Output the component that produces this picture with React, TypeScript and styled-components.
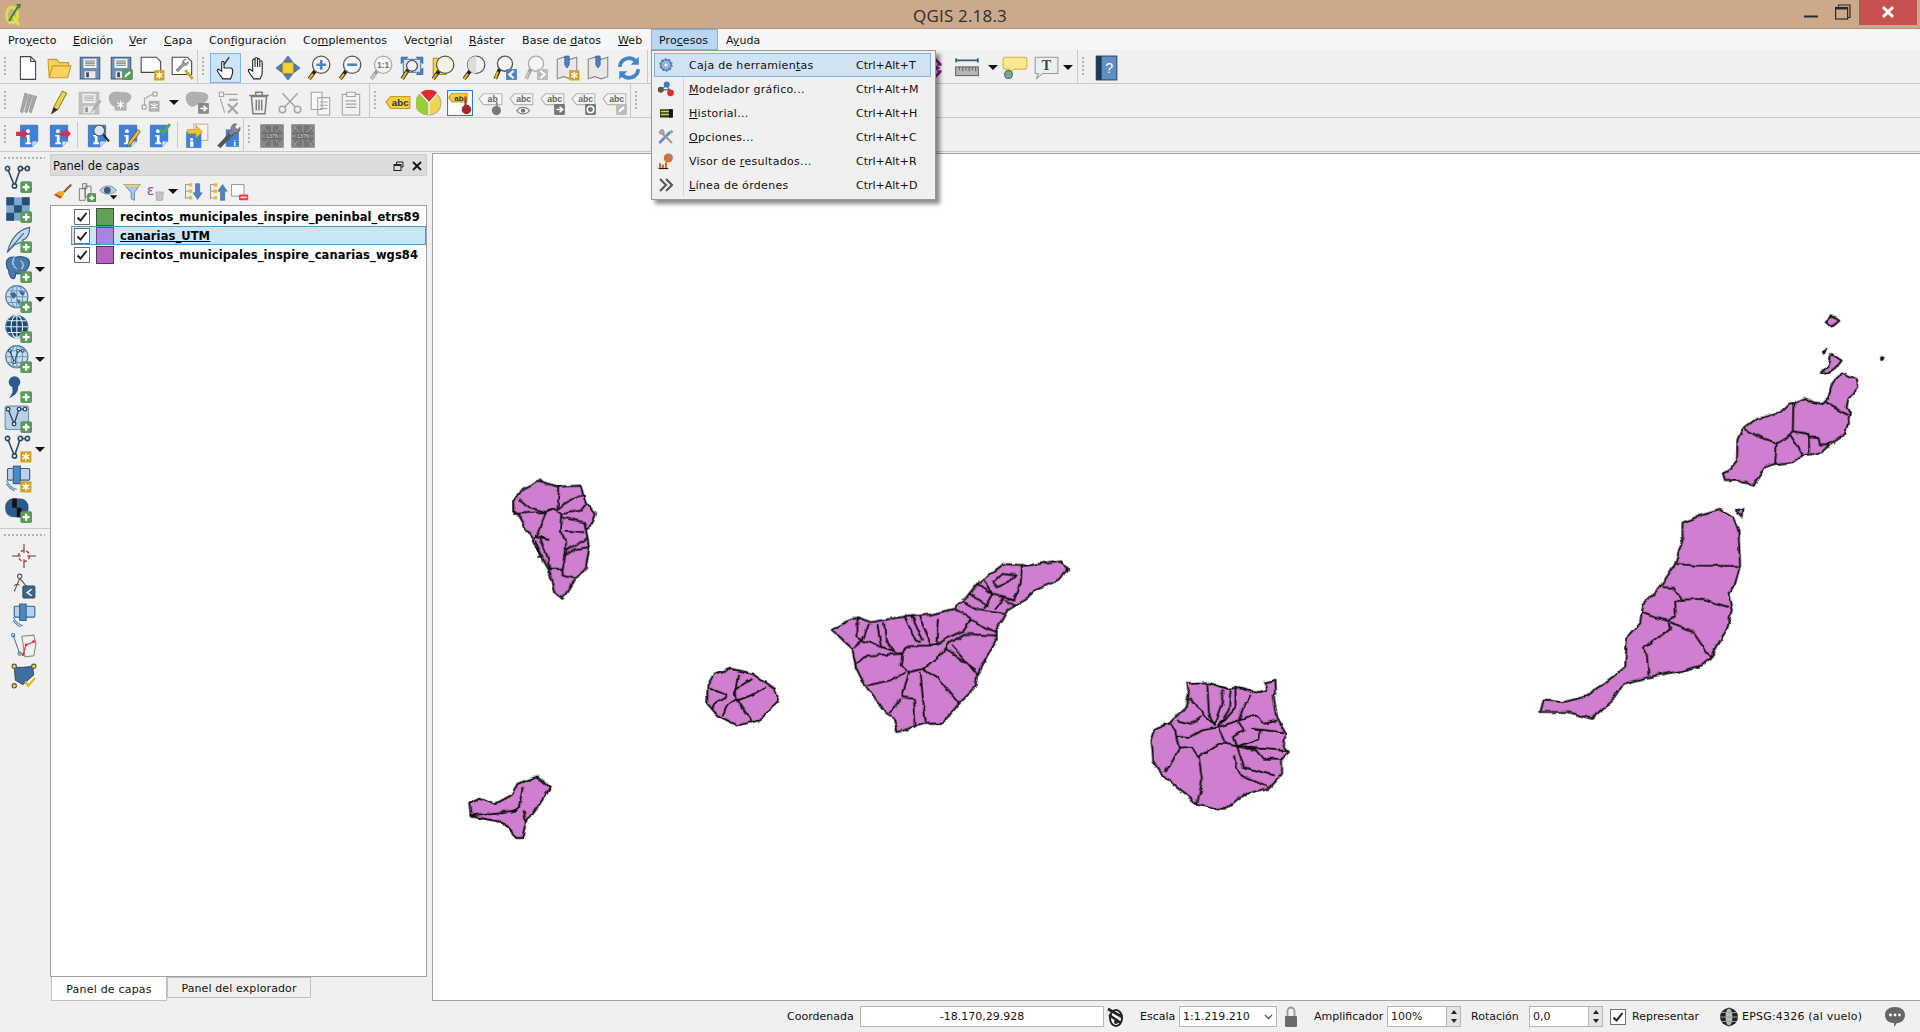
import React from 'react'
import styled, { createGlobalStyle } from 'styled-components'

const Global = createGlobalStyle`
    html, body { margin: 0; padding: 0; height: 100%; overflow: hidden; background: #f0f0f0; }
    body { font-family: "DejaVu Sans", "Liberation Sans", sans-serif; font-size: 11px; color: #111; }
    #root { height: 100%; }
`

const Window = styled.div`
    width: 1920px;
    height: 1032px;
    display: flex;
    flex-direction: column;
    position: relative;
    overflow: hidden;
`

/* title bar */
const TitleBar = styled.div`
    height: 29px;
    flex: none;
    box-sizing: border-box;
    background: #cda98c;
    border-bottom: 1px solid #b3947a;
    display: flex;
    align-items: flex-start;
    position: relative;
`
const TitleText = styled.div`
    position: absolute;
    left: 0;
    right: 0;
    top: 4px;
    text-align: center;
    font: 17px/23px "Open Sans", sans-serif;
    letter-spacing: .2px;
    color: #2e2e2e;
`
const AppLogo = styled.svg`
    width: 18px;
    height: 24px;
    margin: 3px 0 0 4px;
`
const WinButtons = styled.div`
    margin-left: auto;
    display: flex;
    align-items: flex-start;
    margin-right: 3px;
`
const WinBtn = styled.svg<{ $w: number }>`
    width: ${p => p.$w}px;
    height: 25px;
    display: block;
`
const RestoreIcon = styled.svg`
    position: absolute;
    left: 1835px;
    top: 4px;
    width: 16px;
    height: 16px;
`

/* menu bar */
const MenuBar = styled.div`
    height: 21px;
    flex: none;
    background: #f5f6f7;
    display: flex;
    align-items: stretch;
    font-size: 11px;
    letter-spacing: .08px;
`
const MenuEntry = styled.div<{ $w: number; $open?: boolean }>`
    width: ${p => p.$w}px;
    box-sizing: border-box;
    padding-left: 7px;
    line-height: 21px;
    white-space: nowrap;
    border: 1px solid ${p => p.$open ? '#7eb4ea' : 'transparent'};
    background: ${p => p.$open ? '#b8d6f5' : 'transparent'};
`
const Mn = styled.span`
    text-decoration: underline;
`

/* toolbars */
const ToolRow = styled.div<{ $top?: number }>`
    height: 34px;
    flex: none;
    box-sizing: border-box;
    display: flex;
    background: #f0f0f0;
    border-bottom: 1px solid #c9c9c9;
    & > div > div {
        transform: translateY(${p => p.$top ?? 1}px);
    }
`
const ToolGroup = styled.div<{ $w: number; $sep?: boolean }>`
    width: ${p => p.$w}px;
    flex: none;
    box-sizing: border-box;
    display: flex;
    align-items: center;
    padding-left: 12px;
    position: relative;
    border-right: ${p => p.$sep === false ? 'none' : '1px solid #c9c9c9'};
`
const GripBar = styled.i`
    position: absolute;
    left: 4px;
    top: 7px;
    bottom: 7px;
    width: 2px;
    background-image: linear-gradient(#b4b4b4 50%, transparent 50%);
    background-size: 2px 4px;
`
const Tool = styled.div<{ $w?: number; $on?: boolean }>`
    width: ${p => p.$w ?? 31}px;
    height: 30px;
    flex: none;
    box-sizing: border-box;
    display: flex;
    align-items: center;
    justify-content: center;
    background: ${p => p.$on ? '#cce4f7' : 'transparent'};
    border: 1px solid ${p => p.$on ? '#7eb4ea' : 'transparent'};
`
const ThinSep = styled.i`
    width: 1px;
    height: 26px;
    background: #c9c9c9;
    flex: none;
    margin: 0 3px;
`
const DropArrow = styled.i`
    width: 0;
    height: 0;
    flex: none;
    border-left: 5px solid transparent;
    border-right: 5px solid transparent;
    border-top: 5px solid #111;
`
const Glyph = styled.svg.attrs({ viewBox: '0 0 24 24' }) <{ $s?: number }>`
    width: ${p => p.$s ?? 26}px;
    height: ${p => p.$s ?? 26}px;
    flex: none;
    display: block;
`

/* main area */
const Main = styled.div`
    flex: 1;
    display: flex;
    min-height: 0;
`
const SideBar = styled.div`
    width: 50px;
    flex: none;
    box-sizing: border-box;
    padding-top: 3px;
    display: flex;
    flex-direction: column;
    position: relative;
    background: #f0f0f0;
`
const SideGrip = styled.i`
    height: 2px;
    margin: 2px 5px 5px 4px;
    flex: none;
    background-image: linear-gradient(90deg, #b4b4b4 50%, transparent 50%);
    background-size: 4px 2px;
`
const SideTool = styled.div<{ $indent?: number }>`
    height: 30px;
    flex: none;
    display: flex;
    align-items: center;
    padding-left: ${p => p.$indent ?? 4}px;
    gap: 3px;
`
const SideSep = styled.i`
    height: 1px;
    background: #c9c9c9;
    flex: none;
    margin: 4px 0 3px;
`
const LayerPanel = styled.div`
    width: 377px;
    flex: none;
    display: flex;
    flex-direction: column;
    padding-top: 2px;
    box-sizing: border-box;
`
const DockTitle = styled.div`
    height: 22px;
    flex: none;
    box-sizing: border-box;
    background: #dcdcdc;
    border: 1px solid #cfcfcf;
    padding: 2px 4px 0 2px;
    display: flex;
    align-items: center;
    font-size: 11.5px;
    justify-content: space-between;
`
const DockBtns = styled.div`
    display: flex;
    gap: 8px;
    align-items: center;
`
const PanelTools = styled.div`
    height: 25px;
    flex: none;
    margin-top: 3px;
    padding-left: 1px;
    display: flex;
    align-items: center;
`
const PanelTool = styled.div<{ $w?: number }>`
    width: ${p => p.$w ?? 23}px;
    flex: none;
    display: flex;
    justify-content: center;
    align-items: center;
`
const Tree = styled.div`
    flex: 1;
    min-height: 0;
    background: #fff;
    border: 1px solid #a0a0a0;
    box-sizing: border-box;
    padding-top: 1px;
    margin-top: 1px;
`
const LayerRow = styled.div<{ $sel?: boolean }>`
    height: 19px;
    box-sizing: border-box;
    display: flex;
    align-items: center;
    margin-left: 20px;
    padding-left: 3px;
    background: ${p => p.$sel ? '#c9e6f5' : 'transparent'};
    outline: ${p => p.$sel ? '1px solid #4a9bd6' : 'none'};
    outline-offset: -1px;
`
const Check = styled.span`
    width: 16px;
    height: 16px;
    box-sizing: border-box;
    flex: none;
    background: #fff;
    border: 1px solid #707070;
    display: flex;
    align-items: center;
    justify-content: center;
`
const Swatch = styled.span<{ $c: string; $b: string }>`
    width: 18px;
    height: 18px;
    flex: none;
    box-sizing: border-box;
    margin-left: 6px;
    background: ${p => p.$c};
    border: 1px solid ${p => p.$b};
`
const LayerName = styled.span<{ $sel?: boolean }>`
    margin-left: 6px;
    font: bold 11.5px "DejaVu Sans", sans-serif;
    letter-spacing: .085px;
    white-space: nowrap;
    color: #000;
    text-decoration: ${p => p.$sel ? 'underline' : 'none'};
`
const Tabs = styled.div`
    height: 24px;
    flex: none;
    display: flex;
    align-items: flex-start;
`
const Tab = styled.div<{ $on?: boolean; $w: number }>`
    width: ${p => p.$w}px;
    box-sizing: border-box;
    height: ${p => p.$on ? 24 : 21}px;
    line-height: ${p => p.$on ? 25 : 21}px;
    text-align: center;
    background: ${p => p.$on ? '#fff' : '#f0f0f0'};
    border: 1px solid #c0c0c0;
    border-top: ${p => p.$on ? 'none' : '1px solid #c0c0c0'};
    font-size: 11px;
    letter-spacing: ${p => p.$on ? .2 : .12}px;
    margin-left: ${p => p.$on ? 1 : 0}px;
`
const Splitter = styled.div`
    width: 5px;
    flex: none;
`
const MapCanvas = styled.div`
    flex: 1;
    min-width: 0;
    background: #fff;
    border: 1px solid #a0a0a8;
    border-right: none;
    box-sizing: border-box;
    margin-top: 1px;
`
const MapSvg = styled.svg`
    display: block;
    width: 100%;
    height: 100%;
`

/* status bar */
const StatusBar = styled.div`
    height: 31px;
    flex: none;
    background: #f0f0f0;
    display: flex;
    align-items: center;
    font-size: 11px;
    padding-left: 787px;
    white-space: nowrap;
`
const Label = styled.span<{ $w: number; $wide?: boolean }>`
    width: ${p => p.$w}px;
    flex: none;
    letter-spacing: ${p => p.$wide ? .2 : 0}px;
`
const Field = styled.div<{ $w: number; $center?: boolean }>`
    width: ${p => p.$w}px;
    height: 21px;
    flex: none;
    box-sizing: border-box;
    background: #fff;
    border: 1px solid #b5b5b5;
    line-height: 19px;
    padding: 0 3px;
    display: flex;
    justify-content: ${p => p.$center ? 'center' : 'space-between'};
    align-items: center;
`
const Spin = styled.div`
    width: 13px;
    height: 19px;
    margin-right: -3px;
    background: #e4e4e4;
    border-left: 1px solid #b5b5b5;
    display: flex;
    flex-direction: column;
    align-items: center;
    justify-content: space-around;
    flex: none;
`
const SpinUp = styled.i`
    border-left: 3px solid transparent;
    border-right: 3px solid transparent;
    border-bottom: 4px solid #222;
`
const SpinDown = styled.i`
    border-left: 3px solid transparent;
    border-right: 3px solid transparent;
    border-top: 4px solid #222;
`
const Gap = styled.span<{ $w: number }>`
    width: ${p => p.$w}px;
    flex: none;
    display: flex;
    justify-content: center;
`

/* dropdown */
const Dropdown = styled.div`
    position: absolute;
    left: 651px;
    top: 50px;
    width: 285px;
    height: 150px;
    box-sizing: border-box;
    background: #f0f0f0;
    border: 1px solid #979797;
    box-shadow: 4px 4px 4px rgba(0, 0, 0, .45);
    padding: 2px;
    font-size: 11px;
    z-index: 5;
`
const Gutter = styled.i`
    position: absolute;
    left: 31px;
    top: 3px;
    bottom: 3px;
    width: 1px;
    background: #d5d5d5;
`
const DropItem = styled.div<{ $on?: boolean }>`
    height: 24px;
    box-sizing: border-box;
    margin-right: 2px;
    display: flex;
    align-items: center;
    position: relative;
    background: ${p => p.$on ? '#d1e2f2' : 'transparent'};
    border: 1px solid ${p => p.$on ? '#7eb4ea' : 'transparent'};
`
const DropIcon = styled.span`
    width: 22px;
    flex: none;
    display: flex;
    justify-content: center;
    margin-right: 12px;
`
const DropText = styled.span`
    width: 167px;
    flex: none;
    letter-spacing: .3px;
`

/* small reusable drawing parts */
const Plus = ({ x = 14, y = 14 }: { x?: number; y?: number }) => <g transform={`translate(${x} ${y})`}>
    <rect width="10" height="10" rx="1.5" fill="#5c9a5c" />
    <path d="M5 2v6M2 5h6" stroke="#fff" strokeWidth="2" />
</g>
const Star = ({ x = 14, y = 14 }: { x?: number; y?: number }) => <g transform={`translate(${x} ${y})`}>
    <rect width="9.5" height="9.5" fill="#d1a21d" />
    <path d="M4.75 1.5v6.5M1.8 3l5.9 3.5M7.7 3L1.8 6.5" stroke="#fff" strokeWidth="1.2" />
</g>
const Lens = ({ cx = 14, cy = 9, r = 7, fill = '#f4f4f4', grey = false }: { cx?: number; cy?: number; r?: number; fill?: string; grey?: boolean }) => <g>
    <path d={`M${cx - r * .7} ${cy + r * .7}L3 22`} stroke={grey ? '#a0a0a0' : '#222'} strokeWidth="3.4" />
    <path d={`M${cx - r * .95} ${cy + r * 1.05}L3 22`} stroke={grey ? '#c8c8c8' : '#e8b31c'} strokeWidth="2" />
    <circle cx={cx} cy={cy} r={r} fill={fill} stroke={grey ? '#aaa' : '#555'} strokeWidth="1.2" />
</g>
const Page = ({ fill = '#fff', stroke = '#444' }: { fill?: string; stroke?: string }) =>
    <path d="M5 1.5h9.5L19 6v16.5H5zM14.5 1.5V6H19" fill={fill} stroke={stroke} />
const Floppy = ({ c = '#6d8fb6', s = '#3e5d82' }: { c?: string; s?: string }) => <g>
    <path d="M3 2h18v20H3z" fill={c} stroke={s} />
    <rect x="6" y="3.5" width="12" height="8.5" fill="#f2f2f2" />
    <path d="M7.5 5.5h9M7.5 7.5h9M7.5 9.5h9" stroke="#777" />
    <rect x="7" y="15" width="10" height="6.5" fill="#e8e8e8" />
    <rect x="8.5" y="16" width="2.5" height="4.5" fill="#445" />
</g>
const InfoPage = () => <g>
    <path d="M4 2h16v15l-5 5H4z" fill="#3f80d8" stroke="#2a5fa8" strokeWidth=".6" />
    <path d="M20 17h-5v5z" fill="#cfe0f5" />
    <circle cx="11" cy="7.5" r="1.8" fill="#fff" />
    <path d="M8.5 11h4v7h1.5v1.5H8.5V18H10v-5.5H8.5z" fill="#fff" />
</g>
const Abc = ({ t = 'abc', bg = '#f5f5f5', c = '#666', stroke = '#b5b5b5' }: { t?: string; bg?: string; c?: string; stroke?: string }) => <g>
    <path d="M1 8L5 3.5h17v10H5z" fill={bg} stroke={stroke} />
    <text x="13.5" y="11.5" fontSize="8" fontWeight="700" textAnchor="middle" fontFamily="Liberation Sans" fill={c}>{t}</text>
</g>
const VNode = ({ c = '#2a4a66' }: { c?: string }) => <g fill="none" stroke={c} strokeWidth="1.4">
    <path d="M3 3l6 15 5-15h6" />
    <circle cx="3" cy="3" r="1.8" fill="#fff" />
    <circle cx="9" cy="18" r="1.8" fill="#fff" />
    <circle cx="14" cy="3" r="1.8" fill="#fff" />
    <circle cx="20" cy="3" r="1.8" fill="#fff" />
</g>
const Globe = ({ dark = false }: { dark?: boolean }) => <g>
    <circle cx="11" cy="10" r="9.5" fill={dark ? '#1f4a70' : '#c9dcef'} stroke="#4d7aa6" />
    <path d="M11 .5v19M1.5 10h19M3 5h16M3 15h16" stroke={dark ? '#e8f0f8' : '#6d94bb'} strokeWidth=".9" fill="none" />
    <ellipse cx="11" cy="10" rx="5" ry="9.5" fill="none" stroke={dark ? '#e8f0f8' : '#6d94bb'} strokeWidth=".9" />
</g>
const Blob = ({ c = '#b0b0b0' }: { c?: string }) =>
    <path d="M2 7c0-4 4-5.5 9-5s11 0 11 4-3 6-7 6.5-5 3-8 2.5S2 11 2 7z" fill={c} stroke="#999" strokeWidth=".5" />
const Layers3 = () => <g>
    <rect x="3" y="3" width="19" height="10" rx="1" fill="#b9d2ea" stroke="#2d6395" />
    <rect x="8" y="1" width="6" height="15" fill="#4f88bd" stroke="#2d6395" />
    <path d="M2 13c2 4 5 7 9 8M2 16c2 3 4 5 7 6" fill="none" stroke="#5b8bb8" />
</g>
const Wrench = () => <path d="M20 2a5 5 0 0 0-6 6L4 18l3 3 10-10a5 5 0 0 0 6-6l-3 3-3-1-1-3z" fill="#9aa0a6" stroke="#444" strokeWidth=".7" />
const MapSheet = () => <path d="M3 4l6-2 6 2 6-2v18l-6 2-6-2-6 2z" fill="#e8e8e8" stroke="#888" />
const Pin = () => <path d="M10 1h4v8l-2 3-2-3z" fill="#4f81bd" stroke="#2d5a8c" strokeWidth=".7" />

const i = {
    newFile: <Page />,
    open: <path d="M2 7V4h8l2 3h9v3H6l-3 11zM3 21l3-11h17l-3 11z" fill="#f6d35f" stroke="#c79c2e" />,
    save: <Floppy />,
    saveAs: <g><Floppy /><rect x="13" y="13" width="10" height="10" rx="1.5" fill="#5c9a5c" /><path d="M15 21l1-3 4-3 1 1.5-4 3.5z" fill="#fff" /></g>,
    comp: <g><path d="M2 2h14l4 4v10H2z" fill="#fff" stroke="#444" /><Star /></g>,
    compMgr: <g><path d="M2 2h14l4 4v12H2z" fill="#fff" stroke="#444" /><g transform="translate(3 3) scale(.6)"><Wrench /></g><path d="M14 14l7 8" stroke="#d9a520" strokeWidth="2.5" /></g>,
    pointer: <g><path d="M9 22c-2-3-5-6-5-8 0-1 1.5-1 2.5 0L8 15V7c0-1.6 2.2-1.6 2.2 0v5h6c1.5 0 2 1 2 3 0 3-1 4-2 7z" fill="#fff" stroke="#222" /><path d="M15 2l-5 7" stroke="#333" strokeWidth="1.2" /></g>,
    hand: <path d="M9 22c-2-3-5-6-5-8 0-1 1.5-1 2.5 0L8 15V5c0-1.6 2.2-1.6 2.2 0v6V3.5c0-1.6 2.2-1.6 2.2 0V11V4.5c0-1.6 2.2-1.6 2.2 0V11V6.5c0-1.6 2.2-1.6 2.2 0V16c0 3-1 4-2 6z" fill="#fff" stroke="#222" />,
    panSel: <g><rect x="7" y="7" width="10" height="10" fill="#f2cf3f" stroke="#b8941f" /><path d="M12 1l4 5H8zM12 23l4-5H8zM1 12l5-4v8zM23 12l-5-4v8z" fill="#4f81bd" stroke="#2d5a8c" strokeWidth=".7" /></g>,
    zoomIn: <g><Lens r={8} cy={9} /><path d="M14 4.5v9M9.5 9h9" stroke="#4f81bd" strokeWidth="2.4" /></g>,
    zoomOut: <g><Lens r={8} cy={9} /><path d="M9.5 9h9" stroke="#4f81bd" strokeWidth="2.4" /></g>,
    zoom11: <g><Lens r={8} cy={9} grey /><text x="14" y="12" fontSize="8" fontWeight="700" textAnchor="middle" fontFamily="Liberation Sans" fill="#777">1:1</text></g>,
    zoomFull: <g><path d="M2 2h6L2 8zM22 2h-6l6 6zM22 18h-6l6-6z" fill="#4f81bd" stroke="#2d5a8c" strokeWidth=".7" /><rect x="4" y="4" width="16" height="12" fill="#d7e4f2" stroke="#4f81bd" /><Lens r={5} cx={12} cy={10} /></g>,
    zoomLayer: <g><rect x="3" y="3" width="12" height="15" fill="#f2d54a" stroke="#b8941f" /><Lens r={8} cy={9} fill="#f4f2e0" /></g>,
    zoomSel: <g><Lens r={8} cy={9} fill="#f2f2f2" /><path d="M14 1a8 8 0 0 0 0 16z" fill="#dcdcdc" /></g>,
    zoomLast: <g><Lens r={7} cx={12} cy={8} /><rect x="13" y="13" width="10" height="10" fill="#4f81bd" /><path d="M20 14.5L16 18l4 3.5" stroke="#fff" strokeWidth="2" fill="none" /></g>,
    zoomNext: <g><Lens r={7} cx={12} cy={8} grey /><rect x="13" y="13" width="10" height="10" fill="#bbb" /><path d="M16 14.5L20 18l-4 3.5" stroke="#fff" strokeWidth="2" fill="none" /></g>,
    bookNew: <g><MapSheet /><Pin /><Star /></g>,
    book: <g><MapSheet /><Pin /></g>,
    refresh: <g fill="none" stroke="#3f86cc" strokeWidth="3.4"><path d="M3.5 11a8.5 8.5 0 0 1 15-5" /><path d="M20.5 13a8.5 8.5 0 0 1-15 5" /><path d="M21 1.5V9h-7.5zM3 22.5V15h7.5z" fill="#3f86cc" stroke="none" /></g>,
    purple: <path d="M3 3h12l5 5v2h-4V7H3zM3 21h12l5-5v-2h-4v3H3zM12 8l7 4-7 4z" fill="#8e1b8e" />,
    measure: <g><path d="M2 5h20M2 3v4M22 3v4" stroke="#3d5a78" strokeWidth="1.6" /><rect x="1.5" y="11" width="21" height="8" fill="#b5b5b5" stroke="#666" /><path d="M5 11v3M8 11v4M11 11v3M14 11v4M17 11v3M20 11v4" stroke="#666" /></g>,
    tip: <g><path d="M3 2h18a2 2 0 0 1 2 2v7a2 2 0 0 1-2 2h-9l-5 3v-3H3a2 2 0 0 1-2-2V4a2 2 0 0 1 2-2z" fill="#fbe88e" stroke="#d9b53c" /><circle cx="6" cy="18" r="3.6" fill="#79ad79" stroke="#567" /></g>,
    textT: <g><path d="M2 2h21v15H9l-6 5 2-5H2z" fill="#e8f0f4" stroke="#9a9a9a" /><text x="12.5" y="14" fontSize="13" fontWeight="700" textAnchor="middle" fontFamily="Liberation Serif" fill="#444">T</text></g>,
    help: <g><rect x="3" y="1" width="19" height="22" fill="#5f8fc4" stroke="#2d4a66" /><rect x="3" y="1" width="5" height="22" fill="#213a52" /><text x="15" y="17" fontSize="13" textAnchor="middle" fontFamily="Liberation Sans" fill="#fff">?</text></g>,
    pencils: <g fill="#a8a8a8" stroke="#8a8a8a" strokeWidth=".6"><path d="M5 20L9 3l3 1-5 17zM9 20l4-16 3 1-5 16z" /><path d="M13 20l4-15 3 1-5 15z" /></g>,
    pencil: <g><path d="M6 22l2-6L16 1l4 2-8 15z" fill="#f4d04a" stroke="#7a6520" strokeWidth=".8" /><path d="M6 22l2-6 4 2z" fill="#333" /></g>,
    saveEdit: <g opacity=".55"><Floppy c="#9c9c9c" s="#8a8a8a" /><path d="M13 22l3-6 6-7 1.5 1.5-6 7z" fill="#777" /></g>,
    polyStar: <g><Blob /><g transform="translate(7 8)"><rect width="11" height="11" fill="#b0b0b0" /><path d="M5.5 2v7M2.5 3.500l6 4M8.500 3.500l-6 4" stroke="#fff" /></g></g>,
    nodeStar: <g><path d="M5 17V8l9-5" fill="none" stroke="#aaa" /><rect x="3" y="14" width="3.5" height="3.5" fill="#fff" stroke="#999" /><rect x="13" y="2" width="3.5" height="3.5" fill="#fff" stroke="#999" /><g transform="translate(9 10)"><rect width="10" height="10" fill="#b0b0b0" /><path d="M5 2v6M2 3l6 4M8 3L2 7" stroke="#fff" /></g></g>,
    polyArrow: <g><Blob /><rect x="13" y="12" width="10" height="10" rx="1" fill="#888" /><path d="M15 17h5M18 14.5l3 2.5-3 2.5" stroke="#fff" strokeWidth="1.4" fill="none" /></g>,
    nodeTool: <g stroke="#a5a5a5" fill="none"><rect x="3" y="2" width="4" height="4" /><path d="M8 4h12M4 8l4 13" /><path d="M11 13l9 9M20 12l-9 9M12 9h8" strokeWidth="2" /></g>,
    trash: <g fill="none" stroke="#7e7e7e" strokeWidth="1.4"><path d="M5 6h14l-1.500 16h-11zM3 5h18M9 5V2h6v3M9.500 9v10M12 9v10M14.500 9v10" /></g>,
    cut: <g fill="none" stroke="#a5a5a5" strokeWidth="1.4"><circle cx="5" cy="18" r="3" /><circle cx="19" cy="18" r="3" /><path d="M7 16L19 3M17 16L5 3" /></g>,
    copy: <g fill="#f8f8f8" stroke="#a5a5a5"><path d="M3 2h10v16H3zM9 7h11v16H9z" /><path d="M11 11h7M11 14h7M11 17h7" /></g>,
    paste: <g fill="#f2f2f2" stroke="#a5a5a5"><path d="M4 4h16v19H4z" /><path d="M8 2h8v4H8zM7 10h10M7 13h10M7 16h10" /></g>,
    lbl: <g transform="translate(0 2)"><path d="M1 9l4-5h18v11H5z" fill="#f2d03c" stroke="#c59c1d" /><text x="14" y="13" fontSize="9" fontWeight="700" textAnchor="middle" fontFamily="Liberation Sans" fill="#333">abc</text></g>,
    pie: <g><circle cx="12" cy="12" r="11" fill="#f2d54a" stroke="#aaa" /><path d="M12 12L4 3a11 11 0 0 1 16 0z" fill="#e02c2c" /><path d="M12 12v11A11 11 0 0 1 4 3z" fill="#9ccb3c" /><path d="M12 12L4 3M12 12L20 3M12 12v11" stroke="#eee" strokeWidth="1.4" /></g>,
    pinLbl: <g><rect x=".5" y=".5" width="23" height="23" fill="#fff" stroke="#2a7bd4" /><path d="M1.500 7l3-4h14v8H4.500z" fill="#f2d03c" stroke="#c59c1d" /><text x="11" y="10" fontSize="7.5" fontWeight="700" textAnchor="middle" fontFamily="Liberation Sans" fill="#333">ab</text><rect x="16" y="6" width="2" height="10" fill="#b33" /><circle cx="18" cy="18" r="4.400" fill="#a32a2a" /></g>,
    lblPin: <g><Abc t="ab" /><rect x="16.500" y="11" width="1.600" height="6" fill="#888" /><circle cx="17" cy="19" r="4.200" fill="#777" /></g>,
    lblEye: <g><Abc /><path d="M7 19c3-4 9-4 12 0-3 4-9 4-12 0z" fill="#fff" stroke="#888" /><circle cx="13" cy="19" r="2" fill="#777" /></g>,
    lblMove: <g><Abc /><rect x="13" y="13" width="10" height="10" fill="#777" rx="1" /><path d="M15 18h5M18 15.500l3 2.500-3 2.500" stroke="#fff" strokeWidth="1.400" fill="none" /></g>,
    lblRot: <g><Abc /><rect x="13" y="13" width="10" height="10" fill="#777" rx="1" /><circle cx="18" cy="18" r="3" fill="none" stroke="#fff" strokeWidth="1.400" /></g>,
    lblEdit: <g><Abc /><rect x="13" y="13" width="10" height="10" fill="#bbb" rx="1" /><path d="M15 21l1-3 4-3 1 1.500-4 3.500z" fill="#fff" /></g>,
    infoIn: <g transform="translate(1 0)"><InfoPage /><path d="M0 8h6v-3l5 5-5 5v-3H0z" fill="#d22e55" /></g>,
    infoOut: <g><InfoPage /><path d="M13 8h5V5l5 5-5 5v-3h-5z" fill="#d22e55" /></g>,
    infoFind: <g><InfoPage /><circle cx="14" cy="7" r="5" fill="#dde6f0" stroke="#555" /><path d="M18 11l5 6" stroke="#222" strokeWidth="2" /></g>,
    infoPen: <g><InfoPage /><path d="M11 22l2-5 8-11 2.500 2-8 11z" fill="#f0b52a" stroke="#444" strokeWidth=".6" /></g>,
    infoOk: <g><InfoPage /><path d="M13 6l3 3 6-8" stroke="#48b048" strokeWidth="2.600" fill="none" /></g>,
    infoCopy: <g><path d="M9 1h13v15H9z" fill="#f4f4f4" stroke="#bbb" /><path d="M2 8h14v15H2z" fill="#3f80d8" /><path d="M3 6h8V2l6 6-6 6v-4H3z" fill="#f2c32c" stroke="#a5821b" strokeWidth=".5" /><circle cx="7" cy="15" r="1.400" fill="#fff" /><rect x="5.600" y="17" width="3" height="5" fill="#fff" /></g>,
    infoTool: <g><path d="M10 6h12v16H10z" fill="#3f80d8" /><path d="M2 21l12-13 3 3L5 23z" fill="#555" /><path d="M20 1a4 4 0 0 0-5 5l-3 3 3 3 3-3a4 4 0 0 0 5-5l-2 2-2-1-1-2z" fill="#888" stroke="#333" strokeWidth=".5" /><text x="17" y="21" fontSize="8" fontWeight="700" fontFamily="Liberation Serif" fill="#fff">i</text></g>,
    grid: <g><rect x="1.500" y="1.500" width="21" height="21" fill="#777" stroke="#999" /><path d="M2 2l20 20M22 2L2 22M12 2v20M2 12h20M6 2l-4 6M18 2l4 6M6 22l-4-6M18 22l4-6" stroke="#aaa" strokeWidth=".7" /><rect x="6" y="9" width="12" height="6" fill="#666" /><text x="12" y="14" fontSize="5" textAnchor="middle" fontFamily="Liberation Sans" fill="#ddd">1376</text></g>,
    vAdd: <g><VNode /><Plus /></g>,
    raster: <g><rect x="2" y="2" width="20" height="20" fill="#7ea7cf" /><path d="M2 2h6.700v6.700H2zM15.300 2H22v6.700h-6.700zM8.700 8.700h6.600v6.600H8.700zM2 15.300h6.700V22H2z" fill="#274f77" /><Plus /></g>,
    feather: <g><path d="M3 23C5 14 11 4 22 2c0 7-3 10-6 11 1 1 0 2-2 2l-5 2z" fill="#c7d8e8" stroke="#3d6a94" /><path d="M3 23L17 7" stroke="#3d6a94" /><Plus /></g>,
    pg: <g><path d="M2 7c0-4 4-6 8-5 3-1 9-1 11 2s0 8-3 10c0 3-2 4-3 1-2 2-4 1-5 0 0 4-1 6-3 5s-3-5-3-7C2 11 2 9 2 7z" fill="#4a7ba8" stroke="#2d5a8c" /><path d="M9 2c-3 4-1 8 2 10M14 5c3 1 3 5 1 7" stroke="#fff" strokeWidth=".8" fill="none" /><Plus /></g>,
    wms: <g><Globe /><path d="M5 7l4-1 2 3-3 3zM13 5l5 1-1 3-3-1zM11 12l3 1-1 5z" fill="#3e6a94" /><Plus /></g>,
    wcs: <g><Globe dark /><Plus /></g>,
    wfs: <g><Globe /><g transform="translate(3 3) scale(.65)"><VNode /></g><Plus /></g>,
    comma: <g><circle cx="9" cy="6" r="5" fill="#2d5a8c" /><path d="M12 8c1 6-2 10-8 12 3-3 4-6 3-9z" fill="#2d5a8c" /><Plus /></g>,
    vBox: <g><rect x="1" y="1" width="20" height="20" rx="2" fill="#b9d0e6" stroke="#6e93b6" /><g transform="translate(1 1) scale(.85)"><VNode /></g><Plus /></g>,
    vStar: <g><VNode /><Star /></g>,
    layerStar: <g><Layers3 /><Star /></g>,
    ovalAdd: <g><rect x="1" y="3" width="20" height="16" rx="7" fill="#2d5a8c" /><path d="M7 3h4v8H7zM11 11h4v8h-4z" fill="#111" /><Plus /></g>,
    cross: <g stroke="#444" fill="none"><path d="M12 1v8M12 15v8M1 12h8M15 12h8" /><circle cx="12" cy="12" r="5" stroke="#c6363c" strokeDasharray="3 2" strokeWidth="1.400" /></g>,
    compass: <g fill="none" stroke="#555"><circle cx="8" cy="3" r="2" /><path d="M8 5L3 17M8 5l7 8M3 12c2-3 4-1 5-1" /><rect x="11" y="12" width="11" height="11" fill="#3f6885" stroke="#2d4a66" rx="1" /><path d="M19 15l-4 3 4 3" stroke="#fff" strokeWidth="1.400" /></g>,
    layers: <Layers3 />,
    vPoly: <g fill="none"><path d="M2 2l6 17" stroke="#4a7ba8" /><circle cx="2" cy="2" r="1.500" stroke="#4a7ba8" /><circle cx="8" cy="19" r="1.500" stroke="#4a7ba8" /><path d="M10 3l11-1 2 8-2 11-8 1z" stroke="#888" /><path d="M11 20l3-9 7-3" stroke="#d33" /><circle cx="11" cy="20" r="1.300" fill="#d33" /><circle cx="14" cy="11" r="1.300" fill="#d33" /><circle cx="21" cy="8" r="1.300" fill="#d33" /></g>,
    vCheck: <g><path d="M3 4l8 0 9-1 1 8-10 9-7-4z" fill="#3f6fa0" stroke="#222" strokeWidth=".6" /><circle cx="3" cy="3" r="2" fill="#f2d54a" stroke="#555" /><circle cx="21" cy="3" r="2" fill="#f2d54a" stroke="#555" /><circle cx="3" cy="21" r="2" fill="#f2d54a" stroke="#555" /><path d="M13 17l3 4 6-7" stroke="#d9b91c" strokeWidth="2" fill="none" /></g>,
    brush: <g><path d="M13 12L22 3" stroke="#8a6020" strokeWidth="2.600" /><path d="M2 15c3-3 7-6 11-3 1 3-2 7-5 8-2-1-5-2-6-5z" fill="#e8a828" /><path d="M2 15c3 1 6 2 8 4" stroke="#c33" strokeWidth="2" fill="none" /></g>,
    addGroup: <g fill="none" stroke="#666"><path d="M4 8h7v14H4zM11 5h7v13h-7z" fill="#efefef" /><path d="M8 2h5v6H8z" /><Plus x={14} y={14} /></g>,
    eye: <g><path d="M1 10c5-7 15-7 20 0-5 6-15 6-20 0z" fill="#c0cfdc" stroke="#6a8098" /><circle cx="10" cy="10" r="4" fill="#3d5a78" /><path d="M13 16h9l-4.500 5z" fill="#111" /></g>,
    funnel: <g><path d="M2 3h20l-7 9v10l-4-2v-8z" fill="#a9cbe6" stroke="#4a7ba8" /><path d="M2 3h20l-1.500 2.500h-17z" fill="#f2d54a" /></g>,
    epsilon: <g><text x="2" y="15" fontSize="17" fontFamily="DejaVu Sans" fill="#8c5a94">ε</text><path d="M13 12h9l-1 10h-7z" fill="#c4c4c4" stroke="#aaa" /></g>,
    expand: <g><path d="M3 3h6M3 3v17M3 11h6M3 19h6" stroke="#888" fill="none" /><rect x="7" y="1.500" width="4" height="4" fill="#f2b632" /><rect x="7" y="9" width="4" height="4" fill="#f2b632" /><rect x="7" y="17" width="4" height="4" fill="#f2b632" /><path d="M15 2h5v11h3l-5.500 8-5.500-8h3z" fill="#4f81bd" stroke="#2d5a8c" strokeWidth=".6" /></g>,
    collapse: <g><path d="M3 3h6M3 3v17M3 11h6M3 19h6" stroke="#888" fill="none" /><rect x="7" y="1.500" width="4" height="4" fill="#f2b632" /><rect x="7" y="9" width="4" height="4" fill="#f2b632" /><rect x="7" y="17" width="4" height="4" fill="#f2b632" /><path d="M15 22h5V11h3l-5.500-8-5.500 8h3z" fill="#4f81bd" stroke="#2d5a8c" strokeWidth=".6" /></g>,
    removeLayer: <g><path d="M3 3h15v14H3z" fill="#fafafa" stroke="#888" /><rect x="12" y="15" width="11" height="7" rx="1" fill="#e44" /><path d="M14 18.500h7" stroke="#fff" strokeWidth="1.600" /></g>,
    gear: <g><circle cx="12" cy="12" r="7" fill="#a9c4e4" stroke="#4f81bd" strokeWidth="2" /><circle cx="12" cy="12" r="7" fill="none" stroke="#4f81bd" strokeWidth="4" strokeDasharray="2 2.400" /><circle cx="12" cy="12" r="3" fill="#eef3fa" stroke="#4f81bd" /></g>,
    modeler: <g><path d="M5 13L13 7M13 7l5 9M5 13h13" stroke="#777" strokeWidth="2" /><circle cx="5" cy="13" r="4" fill="#555" /><circle cx="13" cy="6" r="4" fill="#3a7ad9" /><circle cx="18" cy="17" r="4.500" fill="#e82a2a" /></g>,
    history: <g><rect x="4" y="7" width="17" height="11" fill="#2a3a1a" /><path d="M5 10h11M5 14h11" stroke="#dcd23c" strokeWidth="2" /><rect x="16" y="7" width="5" height="11" fill="#111" /></g>,
    tools: <g><path d="M3 20L18 5" stroke="#5f8fc4" strokeWidth="3.500" /><path d="M20 20L7 7" stroke="#999" strokeWidth="2.500" /><path d="M8 2a4.500 4.500 0 0 0-5 5l4 2 3-3z" fill="#aaa" stroke="#666" strokeWidth=".6" /><path d="M18 2l4 3-3 2z" fill="#888" /></g>,
    results: <g><circle cx="15" cy="8" r="6" fill="#e06c2c" /><path d="M15 8V2a6 6 0 0 1 6 6z" fill="#8a8a9a" /><path d="M4 21v-6M8 21v-4M12 21v-7" stroke="#d9581c" strokeWidth="2.500" /><path d="M2 22h13" stroke="#222" strokeWidth="1.600" /></g>,
    chevrons: <g fill="none" stroke="#555" strokeWidth="2.800"><path d="M4 4l8 8-8 8M12 4l8 8-8 8" /></g>,
}
type IconName = keyof typeof i

const Ic = ({ n, s }: { n: IconName; s?: number }) => <Glyph $s={s}>{i[n]}</Glyph>

const CheckMark = () => <svg width="12" height="12" viewBox="0 0 12 12"><path d="M1.500 6.500l3 3L10.500 2" fill="none" stroke="#222" strokeWidth="2" /></svg>

/* islands: coordinates were read from crops, so each one carries its crop origin */
type IslandData = { x: number; y: number; outline: string[]; lines: string[] }

const islands: IslandData[] = [
    {
        x: 1520, y: 300,
        outline: [
            '608,515 630,505 650,480 652,420 668,385 715,350 780,335 805,312 820,310 855,295 885,305 905,310 925,290 935,250 965,215 1010,235 1015,260 985,295 980,320 990,340 975,400 930,430 905,455 850,465 820,485 765,490 735,500 700,553 685,545 645,540 615,542',
            '905,215 925,195 935,160 965,180 945,205 925,220',
            '910,150 920,145 915,160',
            '917,65 935,47 955,60 935,77',
            '1086,170 1090,170 1090,174 1086,174',
            '650,630 670,622 668,648',
            '490,670 540,645 600,628 640,650 655,690 660,795 645,850 625,880 635,930 620,990 590,1040 570,1075 545,1095 490,1110 395,1128 310,1150 285,1190 215,1255 140,1235 60,1235 70,1200 130,1205 190,1190 250,1150 315,1100 320,1010 360,965 370,910 420,860 465,790 490,710',
        ],
        lines: [
            '675,385 720,410 770,428 805,408 818,390 820,310',
            '770,428 765,490',
            '818,392 865,400 868,455',
            '810,405 850,465',
            '868,410 895,412 900,432 930,430',
            '915,305 985,345',
            '465,790 530,795 655,797',
            '425,860 460,862 488,897 465,905 467,945 445,962 400,950 367,937',
            '488,897 545,895 625,920',
            '450,965 520,997 572,1073',
            '445,965 450,985 410,1015 365,1045 380,1060 385,1125',
        ],
    },
    {
        x: 820, y: 540,
        outline: ['30,265 60,250 110,230 150,245 240,230 330,222 400,205 440,170 480,120 510,100 550,70 620,75 720,60 740,85 720,115 650,145 620,175 560,210 525,270 525,300 470,400 465,440 415,490 365,550 310,550 230,575 220,535 195,520 130,430 105,380 95,325'],
        lines: [
            '110,230 110,290 125,300 95,325',
            '125,300 145,250',
            '125,300 215,330 245,340',
            '170,250 180,315',
            '190,245 195,300 220,330',
            '250,225 285,300 300,305',
            '270,225 305,300',
            '295,228 325,295 325,315 350,310 355,235',
            '245,340 255,318 325,315 350,312 385,290 430,270 450,235',
            '245,340 240,375 265,395 310,385 360,345 385,310 430,280 525,285',
            '105,375 140,345 245,340',
            '140,435 210,420 255,395',
            '265,395 245,470 280,475',
            '300,395 305,460',
            '240,475 205,520',
            '280,475 285,565',
            '305,460 315,545',
            '310,385 350,410 415,490',
            '395,315 470,400',
            '375,325 465,385',
            '445,235 525,275',
            '400,205 450,235',
            '430,185 480,210 550,220',
            '450,160 500,195',
            '470,130 515,160 490,205',
            '490,120 515,160 580,180 600,130 605,70',
            '580,180 550,170 520,205',
            '550,180 585,195',
            '520,125 545,100 585,105 565,125 530,140 520,125',
        ],
    },
    {
        x: 1130, y: 660,
        outline: ['170,68 230,65 290,85 330,80 385,98 410,90 405,65 435,58 437,100 430,110 440,170 465,215 460,260 475,275 455,295 455,340 425,375 415,385 340,405 290,445 265,445 200,430 100,350 65,300 60,240 72,205 115,190 165,140 175,100'],
        lines: [
            '230,65 235,155 250,195',
            '275,90 275,125 250,195',
            '300,90 295,145 262,200',
            '315,85 315,140 270,190',
            '360,100 335,150 325,180 262,200',
            '175,115 215,150 220,165 250,190',
            '140,180 180,190 215,170',
            '120,190 135,215 145,265 105,335',
            '135,225 180,230 215,210 262,200',
            '145,265 185,262 200,290 265,250 285,250 320,258',
            '262,200 285,250',
            '325,180 380,165 400,190 440,180',
            '325,185 340,210 310,230 320,258 385,235 390,210 360,205',
            '360,205 460,215',
            '320,258 390,265 470,272',
            '320,258 380,270 400,295 455,295',
            '320,258 340,320 430,345',
            '310,285 320,320 330,345 415,380',
            '205,290 215,360 200,430',
        ],
    },
    {
        x: 450, y: 460,
        outline: ['187,125 215,85 265,60 320,78 390,75 405,125 435,160 425,190 405,205 415,265 405,320 370,360 335,415 310,395 295,330 245,240 205,165 187,150'],
        lines: [
            '205,115 235,140 285,155 310,145 335,160',
            '190,160 260,155 285,155',
            '325,80 320,145',
            '395,100 340,130 320,145',
            '405,130 390,150 335,160',
            '310,145 285,155 260,215 245,240',
            '335,160 330,210 345,240 345,275 335,325 295,325',
            '330,170 400,185 405,205',
            '340,210 400,215',
            '345,270 410,235',
            '340,285 375,265 415,260',
            '335,325 335,345 370,355',
            '250,225 290,235 265,225 290,290 295,325',
            '255,240 275,290 262,292',
        ],
    },
    {
        x: 450, y: 650,
        outline: [
            '770,105 790,70 840,55 905,70 970,115 985,155 925,210 860,225 800,195 770,160',
            '55,460 85,445 130,462 180,435 200,400 260,378 297,410 265,460 225,515 215,560 195,560 155,515 60,498',
        ],
        lines: [
            '865,70 855,130 858,145',
            '905,85 860,115 850,135',
            '945,110 900,135 860,150',
            '858,145 830,165 815,195',
            '858,145 905,218',
            '775,115 800,120 830,130 820,145 790,160 785,175',
            '55,495 200,480',
            '215,410 205,470 180,485',
            '218,480 225,515',
        ],
    },
]

const Island = ({ x, y, outline, lines }: IslandData) => <g transform={`translate(${x} ${y}) scale(.3333)`}>
    {outline.map(p => <polygon key={p} points={p} fill="#d07fd0" stroke="#0a0a0a" strokeWidth="1.9" strokeLinejoin="round" vectorEffect="non-scaling-stroke" />)}
    {lines.map(p => <polyline key={p} points={p} fill="none" stroke="#0a0a0a" strokeWidth="1.8" strokeLinejoin="round" vectorEffect="non-scaling-stroke" />)}
</g>

const menus: { w: number; label: React.ReactNode; open?: boolean }[] = [
    { w: 65, label: <>Pro<Mn>y</Mn>ecto</> },
    { w: 56, label: <><Mn>E</Mn>dición</> },
    { w: 35, label: <><Mn>V</Mn>er</> },
    { w: 45, label: <><Mn>C</Mn>apa</> },
    { w: 94, label: <>Con<Mn>f</Mn>iguración</> },
    { w: 101, label: <>Co<Mn>m</Mn>plementos</> },
    { w: 65, label: <>Vect<Mn>o</Mn>rial</> },
    { w: 53, label: <><Mn>R</Mn>áster</> },
    { w: 96, label: <>Base de <Mn>d</Mn>atos</> },
    { w: 41, label: <><Mn>W</Mn>eb</> },
    { w: 67, label: <>Pro<Mn>c</Mn>esos</>, open: true },
    { w: 60, label: <>A<Mn>y</Mn>uda</> },
]

const dropItems: { icon: IconName; label: React.ReactNode; key: string }[] = [
    { icon: 'gear', label: <>Caja de herramien<Mn>t</Mn>as</>, key: 'Ctrl+Alt+T' },
    { icon: 'modeler', label: <><Mn>M</Mn>odelador gráfico...</>, key: 'Ctrl+Alt+M' },
    { icon: 'history', label: <><Mn>H</Mn>istorial...</>, key: 'Ctrl+Alt+H' },
    { icon: 'tools', label: <><Mn>O</Mn>pciones...</>, key: 'Ctrl+Alt+C' },
    { icon: 'results', label: <>Visor de <Mn>r</Mn>esultados...</>, key: 'Ctrl+Alt+R' },
    { icon: 'chevrons', label: <><Mn>L</Mn>ínea de órdenes</>, key: 'Ctrl+Alt+D' },
]

const sideTop: { n: IconName; arrow?: boolean }[] = [
    { n: 'vAdd' }, { n: 'raster' }, { n: 'feather' }, { n: 'pg', arrow: true }, { n: 'wms', arrow: true },
    { n: 'wcs' }, { n: 'wfs', arrow: true }, { n: 'comma' }, { n: 'vBox' }, { n: 'vStar', arrow: true },
    { n: 'layerStar' }, { n: 'ovalAdd' },
]
const sideBottom: IconName[] = ['cross', 'compass', 'layers', 'vPoly', 'vCheck']

const layers = [
    { name: 'recintos_municipales_inspire_peninbal_etrs89', c: '#64a05a', b: '#3a5a34' },
    { name: 'canarias_UTM', c: '#a585e2', b: '#5c4a80', sel: true },
    { name: 'recintos_municipales_inspire_canarias_wgs84', c: '#b565c0', b: '#5c3264' },
]

const row = (names: IconName[]) => names.map((n, k) => <Tool key={k}><Ic n={n} /></Tool>)

export default function App() {
    return <Window>
        <Global />
        <TitleBar>
            <AppLogo viewBox="0 0 18 24">
                <ellipse cx="8" cy="12" rx="5.500" ry="8" fill="none" stroke="#d8e04c" strokeWidth="3" />
                <path d="M8 12l7 10" stroke="#e4e23c" strokeWidth="3" />
                <path d="M5 18L15 2" stroke="#3a8a2c" strokeWidth="2" />
                <path d="M12 1l5 0-1 5z" fill="#3a8a2c" />
            </AppLogo>
            <TitleText>QGIS 2.18.3</TitleText>
            <WinButtons>
                <WinBtn $w={58} viewBox="0 0 58 25">
                    <path d="M3 16.500h14" stroke="#2a2a2a" strokeWidth="2" />
                </WinBtn>
                <WinBtn $w={58} viewBox="0 0 58 25">
                    <rect x="0" y="0" width="58" height="25" fill="#c75050" />
                    <path d="M24 7l10 10M34 7L24 17" stroke="#fff" strokeWidth="3" />
                </WinBtn>
            </WinButtons>
            <RestoreIcon viewBox="0 0 16 16">
                <path d="M3.500 2.500V1h11.500v12.500h-2" fill="none" stroke="#2a2a2a" strokeWidth="1.200" />
                <rect x=".6" y="3.500" width="12" height="11.500" fill="none" stroke="#2a2a2a" strokeWidth="1.200" />
                <path d="M1 4.500h11" stroke="#2a2a2a" strokeWidth="2" />
            </RestoreIcon>
        </TitleBar>

        <MenuBar>
            {menus.map((m, k) => <MenuEntry key={k} $w={m.w} $open={m.open}>{m.label}</MenuEntry>)}
        </MenuBar>

        <ToolRow>
            <ToolGroup $w={198}><GripBar />
                {row(['newFile', 'open', 'save', 'saveAs', 'comp', 'compMgr'])}
            </ToolGroup>
            <ToolGroup $w={450}><GripBar />
                <Tool $on><Ic n="pointer" /></Tool>
                {row(['hand', 'panSel', 'zoomIn', 'zoomOut', 'zoom11', 'zoomFull', 'zoomLayer', 'zoomSel', 'zoomLast', 'zoomNext', 'bookNew', 'book', 'refresh'])}
            </ToolGroup>
            <ToolGroup $w={430}>
                <Tool $w={258} />
                <Tool $w={29}><Ic n="purple" /></Tool>
                <Tool $w={40}><Ic n="measure" /></Tool>
                <Tool $w={12}><DropArrow /></Tool>
                <Tool $w={31}><Ic n="tip" /></Tool>
                <Tool $w={32}><Ic n="textT" /></Tool>
                <Tool $w={12}><DropArrow /></Tool>
            </ToolGroup>
            <ToolGroup $w={200} $sep={false}><GripBar />
                <Tool $w={31}><Ic n="help" /></Tool>
            </ToolGroup>
        </ToolRow>

        <ToolRow $top={2}>
            <ToolGroup $w={370}><GripBar />
                <Tool><Ic n="pencils" /></Tool>
                <Tool $w={30}><Ic n="pencil" /></Tool>
                <Tool><Ic n="saveEdit" /></Tool>
                <Tool $w={32}><Ic n="polyStar" /></Tool>
                <Tool $w={32}><Ic n="nodeStar" /></Tool>
                <Tool $w={12}><DropArrow /></Tool>
                <Tool $w={34}><Ic n="polyArrow" /></Tool>
                <Tool $w={30}><Ic n="nodeTool" /></Tool>
                <Tool $w={30}><Ic n="trash" /></Tool>
                <Tool $w={31}><Ic n="cut" /></Tool>
                <Tool $w={31}><Ic n="copy" /></Tool>
                <Tool $w={30}><Ic n="paste" /></Tool>
            </ToolGroup>
            <ToolGroup $w={261}><GripBar />
                {row(['lbl', 'pie', 'pinLbl', 'lblPin', 'lblEye', 'lblMove', 'lblRot', 'lblEdit'])}
            </ToolGroup>
            <ToolGroup $w={60} $sep={false}><GripBar />
                <Tool $w={20} />
            </ToolGroup>
        </ToolRow>

        <ToolRow>
            <ToolGroup $w={244}><GripBar />
                {row(['infoIn', 'infoOut'])}
                <ThinSep />
                {row(['infoFind', 'infoPen', 'infoOk'])}
                <ThinSep />
                {row(['infoCopy', 'infoTool'])}
            </ToolGroup>
            <ToolGroup $w={130} $sep={false}><GripBar />
                {row(['grid', 'grid'])}
            </ToolGroup>
        </ToolRow>

        <Main>
            <SideBar>
                <SideGrip />
                {sideTop.map(({ n, arrow }) => <SideTool key={n}><Ic n={n} s={28} />{arrow && <DropArrow />}</SideTool>)}
                <SideSep />
                <SideGrip />
                {sideBottom.map(n => <SideTool key={n} $indent={11}><Ic n={n} s={26} /></SideTool>)}
            </SideBar>

            <LayerPanel>
                <DockTitle>
                    Panel de capas
                    <DockBtns>
                        <svg width="11" height="11" viewBox="0 0 11 11"><path d="M3.500 3V1h6.500v5H8" fill="none" stroke="#222" /><rect x="1" y="3.500" width="7" height="6" fill="none" stroke="#222" /><path d="M1 4.500h7" stroke="#222" /></svg>
                        <svg width="10" height="10" viewBox="0 0 10 10"><path d="M1 1l8 8M9 1L1 9" stroke="#111" strokeWidth="1.800" /></svg>
                    </DockBtns>
                </DockTitle>
                <PanelTools>
                    <PanelTool><Ic n="brush" s={20} /></PanelTool>
                    <PanelTool><Ic n="addGroup" s={20} /></PanelTool>
                    <PanelTool><Ic n="eye" s={20} /></PanelTool>
                    <PanelTool><Ic n="funnel" s={20} /></PanelTool>
                    <PanelTool><Ic n="epsilon" s={20} /></PanelTool>
                    <PanelTool $w={14}><DropArrow /></PanelTool>
                    <PanelTool $w={26}><Ic n="expand" s={20} /></PanelTool>
                    <PanelTool><Ic n="collapse" s={20} /></PanelTool>
                    <PanelTool $w={20}><Ic n="removeLayer" s={20} /></PanelTool>
                </PanelTools>
                <Tree>
                    {layers.map(l => <LayerRow key={l.name} $sel={l.sel}>
                        <Check><CheckMark /></Check>
                        <Swatch $c={l.c} $b={l.b} />
                        <LayerName $sel={l.sel}>{l.name}</LayerName>
                    </LayerRow>)}
                </Tree>
                <Tabs>
                    <Tab $on $w={116}>Panel de capas</Tab>
                    <Tab $w={144}>Panel del explorador</Tab>
                </Tabs>
            </LayerPanel>

            <Splitter />

            <MapCanvas>
                <MapSvg viewBox="432 154 1488 845">
                    <defs>
                        <filter id="coast" filterUnits="userSpaceOnUse" x="432" y="154" width="1488" height="845">
                            <feTurbulence type="fractalNoise" baseFrequency=".09" numOctaves="2" seed="4" />
                            <feDisplacementMap in="SourceGraphic" scale="5" xChannelSelector="R" yChannelSelector="G" />
                        </filter>
                    </defs>
                    <g filter="url(#coast)">
                        {islands.map(d => <Island key={d.x + '-' + d.y} {...d} />)}
                    </g>
                </MapSvg>
            </MapCanvas>
        </Main>

        <StatusBar>
            <Label $w={73}>Coordenada</Label>
            <Field $w={244} $center>-18.170,29.928</Field>
            <Gap $w={22}>
                <svg width="20" height="22" viewBox="0 0 20 22"><ellipse cx="11" cy="12" rx="6" ry="8" fill="#fff" stroke="#222" strokeWidth="2" /><path d="M3 3l14 8M4 9l12 8" stroke="#222" strokeWidth="2.600" /><circle cx="11" cy="16" r="2" fill="#222" /></svg>
            </Gap>
            <Gap $w={14} />
            <Label $w={39}>Escala</Label>
            <Field $w={98}>1:1.219.210
                <svg width="9" height="6" viewBox="0 0 9 6"><path d="M1 1l3.500 3.500L8 1" fill="none" stroke="#555" strokeWidth="1.300" /></svg>
            </Field>
            <Gap $w={28}>
                <svg width="14" height="22" viewBox="0 0 14 22"><path d="M3.500 10V5a3.500 3.500 0 0 1 7 0v5" fill="none" stroke="#999" strokeWidth="1.800" /><rect x="1" y="10" width="12" height="11" rx="1" fill="#6a6a6a" /></svg>
            </Gap>
            <Gap $w={9} />
            <Label $w={73}>Amplificador</Label>
            <Field $w={74}>100%<Spin><SpinUp /><SpinDown /></Spin></Field>
            <Gap $w={10} />
            <Label $w={58}>Rotación</Label>
            <Field $w={74}>0,0<Spin><SpinUp /><SpinDown /></Spin></Field>
            <Gap $w={7} />
            <Check><CheckMark /></Check>
            <Gap $w={6} />
            <Label $w={87}>Representar</Label>
            <Gap $w={20}>
                <svg width="20" height="20" viewBox="0 0 20 20"><circle cx="10" cy="10" r="9" fill="#222" /><ellipse cx="10" cy="10" rx="4" ry="9" fill="#bbb" stroke="#222" /><path d="M1 10h18M2.500 5.500h15M2.500 14.500h15" stroke="#999" /></svg>
            </Gap>
            <Gap $w={3} />
            <Label $w={142} $wide>EPSG:4326 (al vuelo)</Label>
            <svg width="22" height="22" viewBox="0 0 22 22"><path d="M11 1c6 0 10 3 10 8s-4 8-8 8l-3 4v-4C5 17 1 14 1 9s4-8 10-8z" fill="#666" /><circle cx="6.500" cy="9" r="1.400" fill="#fff" /><circle cx="11" cy="9" r="1.400" fill="#fff" /><circle cx="15.500" cy="9" r="1.400" fill="#fff" /></svg>
        </StatusBar>

        <Dropdown>
            <Gutter />
            {dropItems.map((d, k) => <DropItem key={d.key} $on={k === 0}>
                <DropIcon><Ic n={d.icon} s={18} /></DropIcon>
                <DropText>{d.label}</DropText>
                {d.key}
            </DropItem>)}
        </Dropdown>
    </Window>
}
